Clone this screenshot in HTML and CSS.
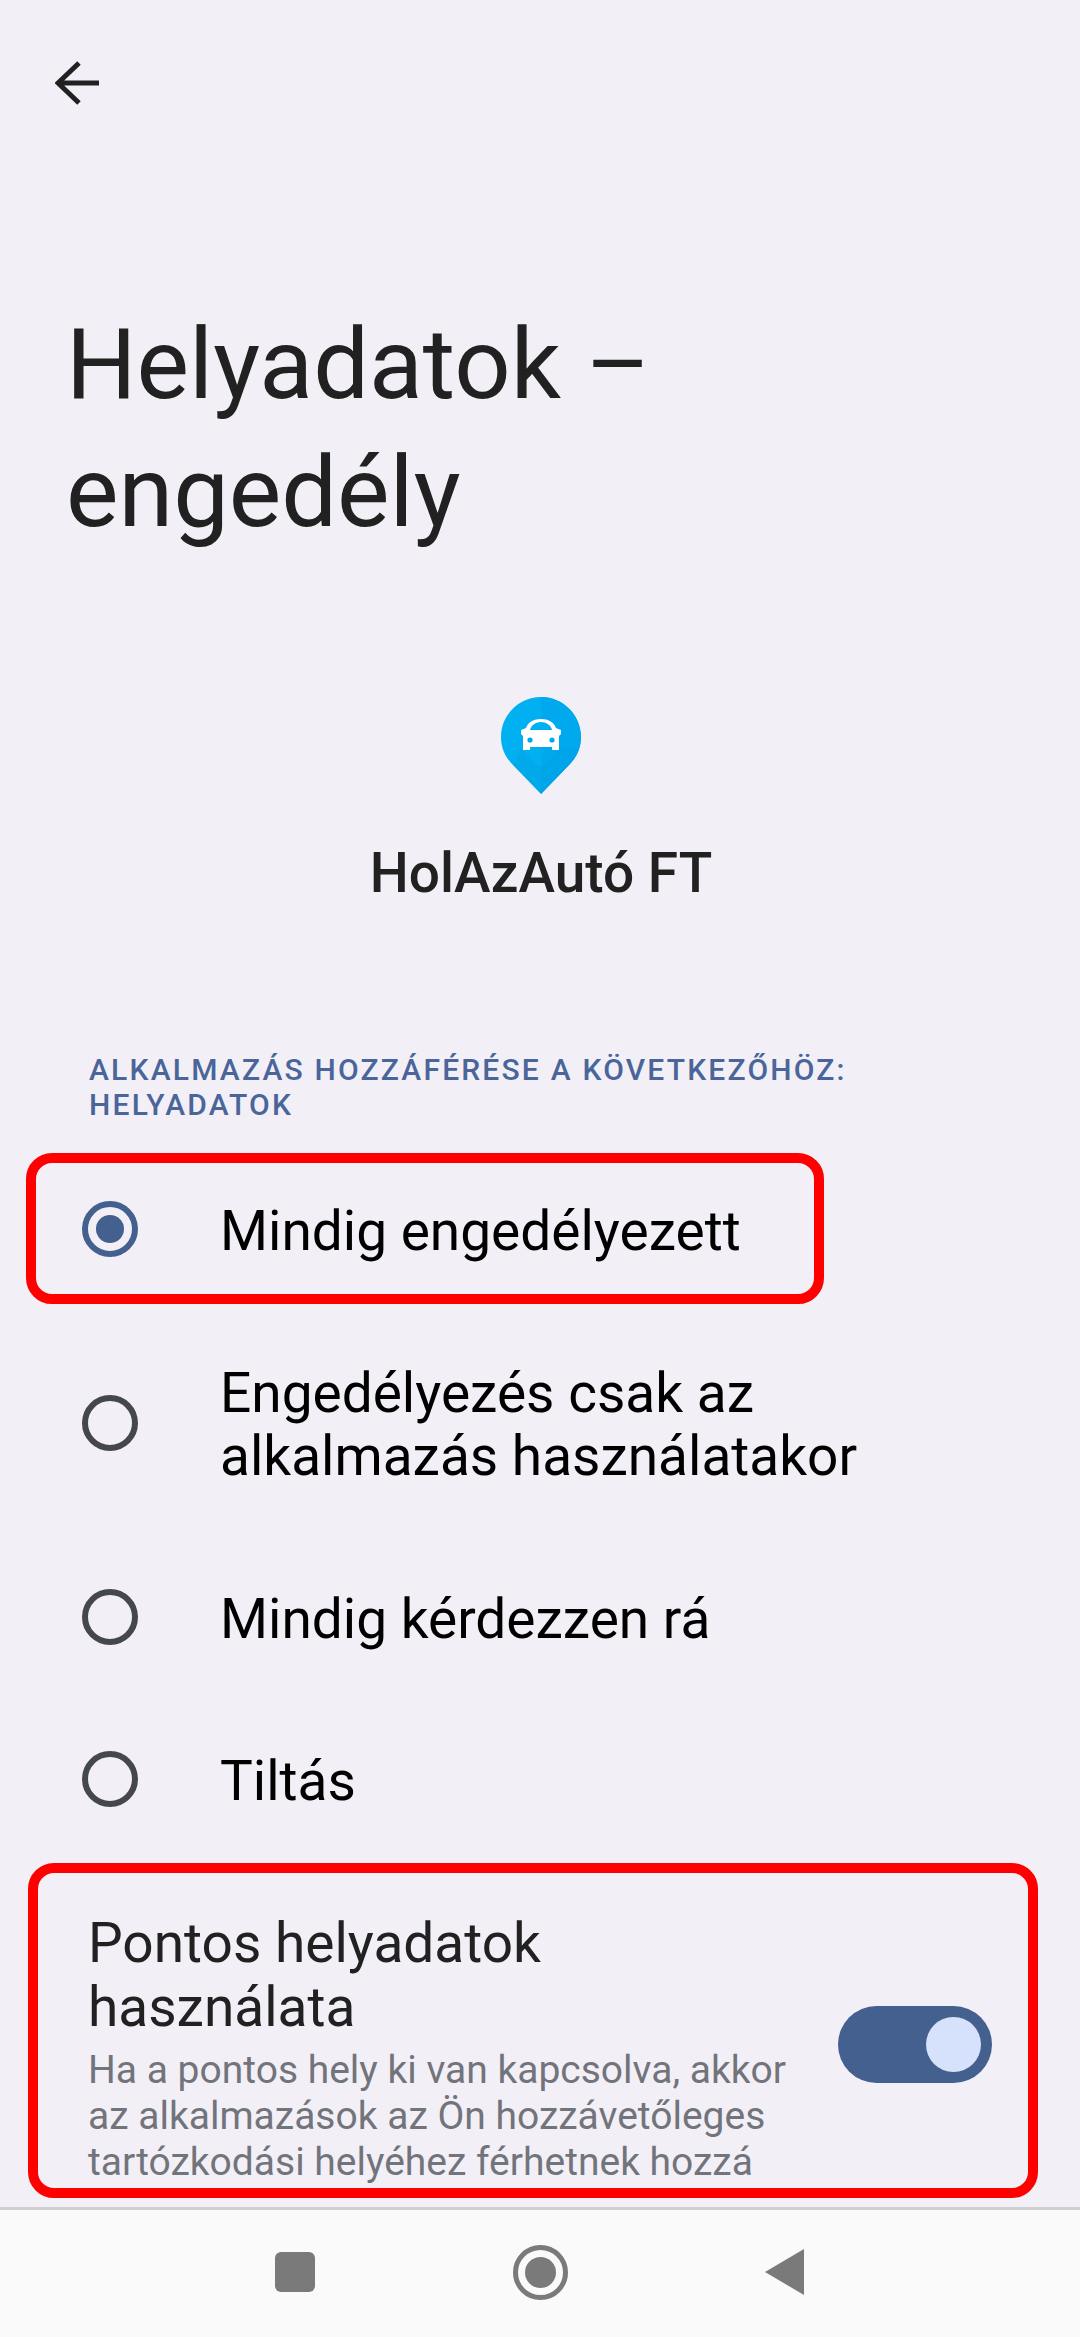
FILE: index.html
```html
<!DOCTYPE html>
<html lang="hu">
<head>
<meta charset="utf-8">
<title>Helyadatok – engedély</title>
<link rel="stylesheet" href="styles.css">
</head>
<body>
<div class="screen">
  <header class="toolbar">
    <svg class="back" viewBox="0 0 44 44" width="44" height="44"><path d="M44 22H3M24 2 3 22l21 20" fill="none" stroke="#212121" stroke-width="5"/></svg>
  </header>
  <h1 class="title">Helyadatok –<br>engedély</h1>
  <div class="app">
    <svg class="pin" viewBox="0 0 80 98" width="80" height="98">
      <path d="M40 0C62 0 80 18 80 40C80 52 75 61 68 68L40 97L12 68C5 61 0 52 0 40C0 18 18 0 40 0Z" fill="#00b0f0"/>
      <path d="M40 0C62 0 80 18 80 40C80 52 75 61 68 68L40 97Z" fill="#00a8ee"/>
      <path d="M20 51 40 71 61 50 78 52 70 66 40 97 12 68Z" fill="#0099d8" opacity=".25"/>
      <path d="M25 31C27 25 33 22 40 22C47 22 53 25 55 31L60 33V37L58 39V53H51V50H29V53H22V39L20 37V33Z" fill="#fff"/>
      <path d="M29 33C30 28 35 25 40 25C45 25 50 28 51 33Z" fill="#00b0f0"/>
      <circle cx="29" cy="43" r="2.6" fill="#00a8ee"/><circle cx="51" cy="43" r="2.6" fill="#00a8ee"/>
    </svg>
    <div class="app-name">HolAzAutó FT</div>
  </div>
  <div class="section">Alkalmazás hozzáférése a következőhöz: Helyadatok</div>
  <div class="options">
    <div class="option"><span class="radio radio-on"></span><span class="label">Mindig engedélyezett</span></div>
    <div class="option option-two"><span class="radio"></span><span class="label">Engedélyezés csak az<br>alkalmazás használatakor</span></div>
    <div class="option"><span class="radio"></span><span class="label">Mindig kérdezzen rá</span></div>
    <div class="option"><span class="radio"></span><span class="label">Tiltás</span></div>
  </div>
  <div class="precise">
    <div class="precise-text">
      <div class="precise-title">Pontos helyadatok használata</div>
      <div class="precise-sub">Ha a pontos hely ki van kapcsolva, akkor az alkalmazások az Ön hozzávetőleges tartózkodási helyéhez férhetnek hozzá</div>
    </div>
    <div class="switch"><span class="knob"></span></div>
  </div>
  <div class="mark mark-one"></div>
  <div class="mark mark-two"></div>
  <nav class="navbar">
    <span class="nav-square"></span>
    <span class="nav-home"></span>
    <span class="nav-back"></span>
  </nav>
</div>
</body>
</html>
```

FILE: styles.css
```css
* { box-sizing: border-box; }
html, body { margin: 0; padding: 0; }
body { background: #f2f0f6; font-family: Roboto, sans-serif; }
.screen { position: relative; width: 1080px; height: 2337px; overflow: hidden; display: flex; flex-direction: column; background: #f2f0f6; }
.toolbar { height: 110px; padding: 61px 0 0 55px; flex: none; }
.back { display: block; }
.title { margin: 190px 0 0; padding-left: 66px; font-weight: 400; font-size: 99px; line-height: 128px; color: #212121; height: 256px; }
.app { margin-top: 141px; padding-left: 2px; display: flex; flex-direction: column; align-items: center; }
.pin { display: block; }
.app-name { margin-top: 48px; font-size: 55px; line-height: 60px; font-weight: 500; color: #212121; }
.section { margin-top: 149px; padding: 0 80px 0 89px; font-size: 30px; line-height: 35px; letter-spacing: 2.2px; text-transform: uppercase; font-weight: 500; color: #4a659a; }
.options { margin-top: 26px; }
.option { display: flex; align-items: center; height: 162px; padding-left: 82px; }
.option-two { height: 226px; }
.radio { width: 56px; height: 56px; border: 6px solid #44474e; border-radius: 50%; flex: none; display: flex; align-items: center; justify-content: center; }
.radio-on { border-color: #43608f; }
.radio-on::after { content: ""; width: 28px; height: 28px; border-radius: 50%; background: #43608f; }
.label { margin: 4px 0 0 82px; font-size: 55px; line-height: 63px; color: #000; }
.precise { padding: 51px 88px 0; display: flex; align-items: center; }
.precise-text { width: 720px; flex: none; }
.precise-title { font-size: 55px; line-height: 64px; color: #212121; max-width: 560px; }
.precise-sub { margin-top: 8px; font-size: 39px; line-height: 46px; color: #72747c; }
.switch { margin: 0 0 8px 30px; width: 154px; height: 77px; border-radius: 39px; background: #43608f; display: flex; align-items: center; justify-content: flex-end; padding-right: 11px; flex: none; }
.knob { width: 55px; height: 55px; border-radius: 50%; background: #d6e2fb; }
.mark { position: absolute; border: 10px solid #ff0000; border-radius: 26px; }
.mark-one { left: 26px; top: 1153px; width: 798px; height: 151px; }
.mark-two { left: 28px; top: 1863px; width: 1010px; height: 335px; }
.navbar { position: absolute; left: 0; top: 2207px; width: 1080px; height: 130px; background: #fafafa; border-top: 3px solid #d0d0d0; }
.nav-square { position: absolute; left: 275px; top: 42px; width: 40px; height: 40px; background: #7a7a7a; border-radius: 6px; }
.nav-home { position: absolute; left: 513px; top: 35px; width: 55px; height: 55px; border: 5px solid #7a7a7a; border-radius: 50%; display: flex; align-items: center; justify-content: center; }
.nav-home::after { content: ""; width: 31px; height: 31px; border-radius: 50%; background: #7a7a7a; }
.nav-back { position: absolute; left: 765px; top: 39px; width: 39px; height: 46px; background: #7a7a7a; clip-path: polygon(100% 0, 100% 100%, 0 50%); }
```
